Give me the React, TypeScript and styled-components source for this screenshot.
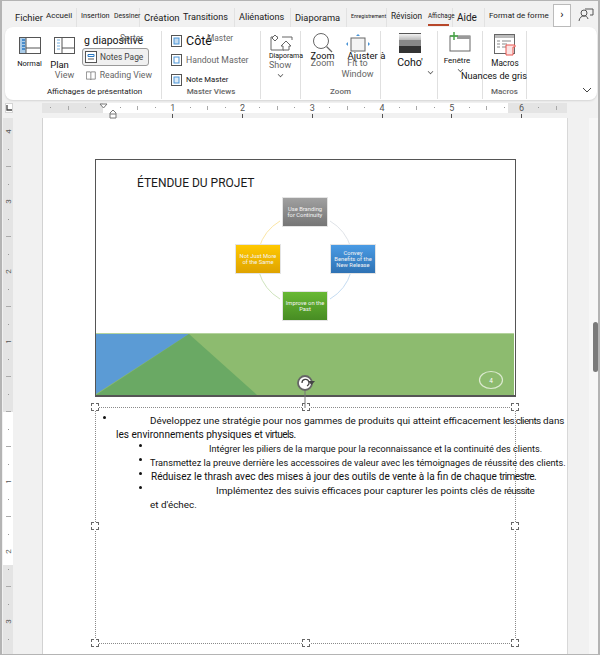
import React from "react";
import styled, { createGlobalStyle } from "styled-components";

const Global = createGlobalStyle`
  html, body { margin: 0; padding: 0; background: #fff; }
  * { box-sizing: border-box; }
  body { font-family: Roboto, "Open Sans", sans-serif; }
`;

const tabs = [
  { label: "Fichier", w: 27, size: 9.4 },
  { label: "Accueil", w: 31, size: 8, sep: true, up: true },
  { label: "Insertion", w: 29, size: 7.3, up: true },
  { label: "Dessiner", w: 26, size: 6.8, sep: true, up: true },
  { label: "Création", w: 35, size: 9.5 },
  { label: "Transitions", w: 52, size: 9.1, sep: true },
  { label: "Aliénations", w: 52, size: 9.1, sep: true },
  { label: "Diaporama", w: 52, size: 9.3, sep: true },
  { label: "Enregistrement", w: 36, size: 5.2, sep: true, up: true },
  { label: "Révision", w: 33, size: 8.3, up: true },
  { label: "Affichage", w: 25, size: 6.3, active: true, sep: true, up: true },
  { label: "Aide", w: 28, size: 10, sep: true },
  { label: "Format de forme", w: 60, size: 8, up: true }
];

const hRuler = Array.from({ length: 30 }, (_, i) => i - 3);
const vRuler = Array.from({ length: 30 }, (_, i) => i);
const vLabels: Record<number, number> = { 0: 4, 4: 3, 8: 2, 12: 1, 20: 1, 24: 2, 28: 3 };

export default function App() {
  return (
    <Window>
      <Global />
      <TabBar>
        {tabs.map(t => (
          <Tab key={t.label} $w={t.w} $size={t.size} $active={t.active} $sep={t.sep} $up={t.up}>
            {t.label}
          </Tab>
        ))}
        <MoreBox>›</MoreBox>
        <CommentIcon width="16" height="16" viewBox="0 0 16 16">
          <circle cx="6" cy="6" r="3" fill="none" stroke="#555" />
          <path d="M1 14c.5-3.5 2.5-5 5-5s3.500 1 4 3M7 2h8v6h-3" fill="none" stroke="#555" />
        </CommentIcon>
      </TabBar>

      <Ribbon>
        <Group $w={157}>
          <GroupBody $pad={7}>
            <BigButton $w={35}>
              <IconSlot $h={24}>
                <svg width="22" height="17" viewBox="0 0 22 17">
                  <rect x=".5" y=".5" width="21" height="16" fill="#fff" stroke="#555" />
                  <rect x="1" y="1" width="6" height="15" fill="#a9cbe8" />
                  <path d="M3 3h3M3 6h3M3 9h3M3 12h3" stroke="#2b79c2" strokeWidth="1.500" />
                  <path d="M7 1v15M7 11h14" stroke="#555" />
                </svg>
              </IconSlot>
              <SmallBlack $size={7.5} $mt={1}>Normal</SmallBlack>
            </BigButton>
            <BigButton $w={35}>
              <IconSlot $h={24}>
                <svg width="21" height="17" viewBox="0 0 21 17">
                  <rect x=".5" y=".5" width="20" height="16" fill="#fff" stroke="#555" />
                  <path d="M3 3h3M3 6h3M3 9h3M3 12h3" stroke="#74b0e0" />
                  <path d="M8 1v15M8 11h12" stroke="#555" />
                </svg>
              </IconSlot>
              <PlanLabel>Plan</PlanLabel>
              <Ghost>View</Ghost>
            </BigButton>
            <ViewColumn>
              <ViewLine>
                <BlackLabel $size={10.5}>g diapositive</BlackLabel>
                <GhostOver>Sorter</GhostOver>
              </ViewLine>
              <NotesButton>
                <svg width="12" height="12" viewBox="0 0 12 12">
                  <rect x=".5" y=".5" width="11" height="11" fill="#fff" stroke="#555" />
                  <path d="M3 3.500h6v2H3z" fill="none" stroke="#2b79c2" />
                  <path d="M3 8h6" stroke="#555" />
                </svg>
                <span>Notes Page</span>
              </NotesButton>
              <ReadingRow>
                <svg width="12" height="11" viewBox="0 0 12 11">
                  <path d="M.5 1h5l.5 1 .5-1h5v9h-5l-.5 1-.5-1h-5zM6 2v8" fill="none" stroke="#777" />
                </svg>
                <span>Reading View</span>
              </ReadingRow>
            </ViewColumn>
          </GroupBody>
          <GroupLabel $dark>Affichages de présentation</GroupLabel>
        </Group>

        <Group $w={99}>
          <MasterColumn>
            <MasterRow>
              <MasterIcon $fill="#c5dcf0" />
              <BlackLabel $size={12.5}>Côté</BlackLabel>
              <GhostInline>Master</GhostInline>
            </MasterRow>
            <MasterRow>
              <MasterIcon $fill="#fff" />
              <GhostText $size={8.7}>Handout Master</GhostText>
            </MasterRow>
            <MasterRow>
              <MasterIcon $fill="#dcebf7" />
              <BlackLabel $size={7.7}>Note Master</BlackLabel>
            </MasterRow>
          </MasterColumn>
          <GroupLabel>Master Views</GroupLabel>
        </Group>

        <Group $w={40}>
          <GroupBody $pad={8}>
            <ShowButton>
              <ShowIcon width="24" height="19" viewBox="0 0 24 19">
                <path d="M2 4h7M13 4h10M2 4v13h13M23 4v3" fill="none" stroke="#666" />
                <path d="M6 2l3 3-3 3-3-3zM17 8l5 5h-2v4h-6v-4h-2z" fill="#fff" stroke="#666" />
              </ShowIcon>
              <NarrowBlack>Diaporama</NarrowBlack>
              <Ghost>Show</Ghost>
              <ShowChevron />
            </ShowButton>
          </GroupBody>
        </Group>

        <Group $w={80}>
          <GroupBody $pad={8}>
            <BigButton $w={27}>
              <IconSlot $h={24} $lift={5}>
                <svg width="22" height="22" viewBox="0 0 22 22">
                  <circle cx="9" cy="9" r="7.500" fill="#fff" stroke="#666" />
                  <path d="M14.500 14.500L20 20" stroke="#666" strokeWidth="1.300" />
                </svg>
              </IconSlot>
              <StackedLabel>
                <BlackLabel $size={9.2}>Zoom</BlackLabel>
                <Ghost>Zoom</Ghost>
              </StackedLabel>
            </BigButton>
            <BigButton $w={43}>
              <IconSlot $h={24} $lift={2}>
                <svg width="24" height="20" viewBox="0 0 24 20">
                  <rect x="5" y="4" width="14" height="13" fill="#f4f4f4" stroke="#666" />
                  <path d="M12 0l2 2h-4zM0 10l2-2v4zM24 10l-2-2v4z" fill="#4a94d6" />
                </svg>
              </IconSlot>
              <StackedLabel>
                <AjusterLabel>Ajuster à</AjusterLabel>
                <Ghost>Fit to</Ghost>
              </StackedLabel>
              <Ghost>Window</Ghost>
            </BigButton>
          </GroupBody>
          <GroupLabel>Zoom</GroupLabel>
        </Group>

        <Group $w={57}>
          <GroupBody $pad={14}>
            <BigButton $w={30}>
              <IconSlot $h={24} $lift={5}>
                <ColorSwatch />
              </IconSlot>
              <SmallBlack $size={10.5} $mt={0}>Coho'</SmallBlack>
            </BigButton>
            <ChevronEnd />
          </GroupBody>
        </Group>

        <Group $w={45}>
          <GroupBody $pad={5}>
            <BigButton $w={34}>
              <IconSlot $h={24} $lift={6}>
                <svg width="24" height="20" viewBox="0 0 24 20">
                  <rect x="2" y="4" width="20" height="15" fill="#fff" stroke="#666" />
                  <rect x="9" y="4" width="13" height="3" fill="#999" />
                  <path d="M6 0v8M2 4h8" stroke="#46a546" strokeWidth="1.500" />
                </svg>
              </IconSlot>
              <FenetreLabel>Fenêtre</FenetreLabel>
              <FenetreChevron />
            </BigButton>
          </GroupBody>
          <GrayOverlay>Nuances de gris</GrayOverlay>
        </Group>

        <Group $w={44}>
          <GroupBody $pad={5}>
            <BigButton $w={34}>
              <IconSlot $h={24}>
                <svg width="23" height="23" viewBox="0 0 23 23">
                  <rect x=".5" y=".5" width="20" height="19" fill="#fff" stroke="#666" />
                  <rect x="1" y="1" width="19" height="3" fill="#bbb" />
                  <path d="M3 7h3M3 10h3M3 13h3M8 7h9M8 10h5M8 13h5" stroke="#888" />
                  <path d="M12 11h9v2h-2v8h-7z" fill="#fbe4e4" stroke="#e8544f" />
                </svg>
              </IconSlot>
              <SmallBlack $size={8.2} $mt={1}>Macros</SmallBlack>
            </BigButton>
          </GroupBody>
          <GroupLabel>Macros</GroupLabel>
        </Group>

        <CollapseSlot>
          <svg width="10" height="6" viewBox="0 0 10 6">
            <path d="M1 1l4 4 4-4" fill="none" stroke="#444" />
          </svg>
        </CollapseSlot>
      </Ribbon>

      <RulerRow>
        <CornerBox>
          <svg width="6" height="6" viewBox="0 0 6 6">
            <path d="M1 0v5h5" fill="none" stroke="#444" strokeWidth="1.300" />
          </svg>
        </CornerBox>
        <RulerTrack>
          {hRuler.map(i => (
            <RulerCell key={i}>
              {i % 4 === 0 && i > -4 && i !== 0 ? (
                <>
                  <RulerNumber>{i / 4}</RulerNumber>
                  <DarkTick />
                </>
              ) : i % 2 === 0 && i !== 0 ? (
                <LongTick />
              ) : i !== 0 ? (
                <Dot />
              ) : null}
            </RulerCell>
          ))}
          <IndentMarks width="30" height="16" viewBox="0 0 30 16">
            <path d="M1 1h7l-3.500 4z" fill="#fff" stroke="#777" />
            <path d="M11 10l3-3 3 3v5h-6zM11 11h6" fill="#fff" stroke="#777" />
          </IndentMarks>
        </RulerTrack>
      </RulerRow>

      <Workspace>
        <SidePanel>
          <VerticalRuler>
            {vRuler.map(i => (
              <VCell key={i}>
                {vLabels[i] ? <VNumber>{vLabels[i]}</VNumber> : i % 2 === 0 ? <VTick /> : <VDot />}
              </VCell>
            ))}
          </VerticalRuler>
        </SidePanel>

        <Page>
          <Slide>
            <SlideTitle>ÉTENDUE DU PROJET</SlideTitle>
            <Cycle width="120" height="120" viewBox="0 0 120 120">
              <path d="M35 21A47 47 0 0 0 14 48" fill="none" stroke="#fbe6a6" />
              <path d="M85 21A47 47 0 0 1 106 48" fill="none" stroke="#dfe3e8" />
              <path d="M106 72A47 47 0 0 1 85 99" fill="none" stroke="#c5dcf2" />
              <path d="M14 72A47 47 0 0 0 35 99" fill="none" stroke="#cfe4bd" />
            </Cycle>
            <Node $x={186} $y={37} $from="#a0a0a0" $to="#757575">Use Branding for Continuity</Node>
            <Node $x={234} $y={84} $from="#4a9be4" $to="#2e72b4">Convey Benefits of the New Release</Node>
            <Node $x={139} $y={84} $from="#ffc800" $to="#dfa300">Not Just More of the Same</Node>
            <Node $x={186} $y={131} $from="#68b934" $to="#478c23">Improve on the Past</Node>
            <Band width="418" height="62" viewBox="0 0 418 62">
              <rect width="418" height="62" fill="#8dbb6f" />
              <rect width="418" height="1" fill="#b4d39d" />
              <path d="M0 1h93L0 61z" fill="#5b9bd5" />
              <path d="M0 62L93 1l68 61z" fill="#6aa964" />
              <ellipse cx="395" cy="47" rx="11.500" ry="8.500" fill="none" stroke="#dcead0" strokeWidth="1.200" />
              <text x="395" y="49.500" textAnchor="middle" fontSize="6.500" fontFamily="Roboto" fill="#fff">4</text>
            </Band>
            <RotateHandle width="24" height="34" viewBox="0 0 24 34">
              <path d="M10 16v18" stroke="#777" />
              <circle cx="10" cy="9" r="7" fill="#fff" stroke="#666" strokeWidth="1.800" />
              <path d="M7 9a3.500 3.500 0 1 1 5 3" fill="none" stroke="#444" strokeWidth="1.200" />
              <path d="M13 7h7l-3.500 4z" fill="#444" />
            </RotateHandle>
          </Slide>

          <TextBox>
            <BulletLine $bullet={7} $indent={47} $size={9.9}>
              Développez une stratégie pour nos gammes de produits qui atteint efficacement <Tight>les clients</Tight> dans
            </BulletLine>
            <Wrapped $indent={20} $size={10.1}>les environnements physiques et <Tight>virtuels</Tight>.</Wrapped>
            <BulletLine $bullet={43} $indent={70} $size={9.1}>
              Intégrer les piliers de la marque pour la reconnaissance et la continuité des clients.
            </BulletLine>
            <BulletLine $bullet={43} $indent={11} $size={9.2}>
              Transmettez la preuve derrière les accessoires de valeur avec les témoignages de réussite des clients.
            </BulletLine>
            <BulletLine $bullet={43} $indent={12} $size={10}>
              Réduisez le thrash avec des mises à jour des outils de vente à la fin de chaque <Tight>trimestre</Tight>.
            </BulletLine>
            <BulletLine $bullet={43} $indent={77} $size={9.9}>
              Implémentez des suivis efficaces pour capturer les points clés de <Tight>réussite</Tight>
            </BulletLine>
            <Wrapped $indent={54} $size={9.9}>et d'échec.</Wrapped>
            <Handle $h="left" $v="top" />
            <Handle $h="center" $v="top" />
            <Handle $h="right" $v="top" />
            <Handle $h="left" $v="middle" />
            <Handle $h="right" $v="middle" />
            <Handle $h="left" $v="bottom" />
            <Handle $h="center" $v="bottom" />
            <Handle $h="right" $v="bottom" />
          </TextBox>
        </Page>

        <ScrollPanel>
          <ScrollThumb />
        </ScrollPanel>
      </Workspace>
    </Window>
  );
}

const Window = styled.div`
  width: 600px;
  height: 655px;
  overflow: hidden;
  display: flex;
  flex-direction: column;
  background: #f1f1f1;
  border: 1px solid #b4b4b4;
  border-width: 1px 2px 1px 2px;
  color: #111;
  position: relative;
`;

const TabBar = styled.div`
  height: 26px;
  display: flex;
  align-items: flex-end;
  padding-left: 13px;
  flex-shrink: 0;
`;

const Tab = styled.div<{ $w: number; $size: number; $active?: boolean; $sep?: boolean; $up?: boolean }>`
  width: ${p => p.$w}px;
  height: 19px;
  margin-right: 4px;
  font-size: ${p => p.$size}px;
  white-space: nowrap;
  line-height: ${p => (p.$up ? 16 : 19)}px;
  position: relative;
  color: #1a1a1a;
  border-right: ${p => (p.$sep ? "1px solid #e2e2e2" : "none")};

  &::after {
    content: "";
    display: ${p => (p.$active ? "block" : "none")};
    position: absolute;
    left: 0;
    right: 3px;
    bottom: 1px;
    height: 2px;
    background: #b7472a;
  }
`;

const MoreBox = styled.div`
  width: 18px;
  height: 23px;
  margin: 0 7px 0 0;
  background: #fff;
  border: 1px solid #bbb;
  font-size: 11px;
  text-align: center;
  line-height: 20px;
`;

const CommentIcon = styled.svg`
  margin-bottom: 4px;
`;

const Ribbon = styled.div`
  height: 73px;
  margin: 0 1px 0 3px;
  background: #fff;
  border-radius: 8px;
  display: flex;
  flex-shrink: 0;
  box-shadow: 0 1px 2px rgba(0, 0, 0, 0.12);
`;

const Group = styled.div<{ $w: number }>`
  width: ${p => p.$w}px;
  height: 68px;
  margin-top: 4px;
  flex-shrink: 0;
  display: flex;
  flex-direction: column;
  border-right: 1px solid #e0e0e0;
  position: relative;
`;

const GroupBody = styled.div<{ $pad: number }>`
  flex: 1;
  display: flex;
  padding-left: ${p => p.$pad}px;
  min-height: 0;
`;

const GroupLabel = styled.div<{ $dark?: boolean }>`
  height: 14px;
  flex-shrink: 0;
  line-height: 13px;
  text-align: center;
  font-size: 8px;
  padding-left: ${p => (p.$dark ? 23 : 0)}px;
  font-weight: ${p => (p.$dark ? 400 : 500)};
  color: ${p => (p.$dark ? "#222" : "#666")};
  white-space: nowrap;
`;

const BigButton = styled.div<{ $w: number }>`
  width: ${p => p.$w}px;
  display: flex;
  flex-direction: column;
  align-items: center;
  flex-shrink: 0;
`;

const IconSlot = styled.div<{ $h: number; $lift?: number }>`
  height: ${p => p.$h}px;
  margin-top: 2px;
  padding-bottom: ${p => p.$lift || 0}px;
  display: flex;
  align-items: center;
  justify-content: center;
`;

const SmallBlack = styled.div<{ $size: number; $mt: number }>`
  font-size: ${p => p.$size}px;
  line-height: 11px;
  margin-top: ${p => p.$mt}px;
  white-space: nowrap;
  color: #111;
`;

const PlanLabel = styled.div`
  font-size: 9.500px;
  line-height: 11px;
  margin: 2px 10px 0 0;
  color: #111;
`;

const FenetreLabel = styled.div`
  font-size: 8px;
  line-height: 11px;
  margin: -2px 6px 0 0;
  white-space: nowrap;
  color: #111;
`;

const NarrowBlack = styled.div`
  font-size: 7px;
  line-height: 8px;
  margin-top: 0;
  white-space: nowrap;
`;

const Ghost = styled.div`
  font-size: 9px;
  line-height: 11px;
  color: #666;
  white-space: nowrap;
`;

const StackedLabel = styled.div`
  display: flex;
  flex-direction: column;
  align-items: center;
  margin-top: -7px;

  ${Ghost} {
    margin-top: -4px;
  }
`;

const ShowButton = styled.div`
  display: flex;
  flex-direction: column;
  align-items: flex-start;
  width: 30px;
  flex-shrink: 0;
`;

const ShowIcon = styled.svg`
  margin-top: 2px;
  flex-shrink: 0;
`;

const BlackLabel = styled.span<{ $size: number }>`
  font-size: ${p => p.$size}px;
  line-height: 12px;
  white-space: nowrap;
  color: #111;
`;

const AjusterLabel = styled.span`
  font-size: 9.600px;
  line-height: 12px;
  white-space: nowrap;
  color: #111;
  margin-left: 18px;
`;

const GhostText = styled.span<{ $size: number }>`
  font-size: ${p => p.$size}px;
  color: #666;
  white-space: nowrap;
`;

const ViewColumn = styled.div`
  display: flex;
  flex-direction: column;
  width: 70px;
`;

const ViewLine = styled.div`
  height: 18px;
  padding-top: 4px;
  padding-left: 2px;
  position: relative;
  display: flex;
`;

const GhostOver = styled.span`
  position: absolute;
  left: 38px;
  top: 2px;
  font-size: 8.500px;
  color: #666;
`;

const NotesButton = styled.div`
  height: 18px;
  width: 67px;
  background: #f0f0f0;
  border: 1px solid #9a9a9a;
  border-radius: 3px;
  display: flex;
  align-items: center;
  gap: 3px;
  padding-left: 2px;
  font-size: 8.400px;
  color: #444;
  white-space: nowrap;
`;

const ReadingRow = styled.div`
  height: 20px;
  display: flex;
  align-items: center;
  gap: 4px;
  padding-left: 4px;
  font-size: 8.700px;
  color: #666;
  white-space: nowrap;
`;

const MasterColumn = styled.div`
  height: 54px;
  flex-shrink: 0;
  display: flex;
  flex-direction: column;
  padding: 0 0 0 9px;
`;

const MasterRow = styled.div`
  height: 19.500px;
  flex-shrink: 0;
  display: flex;
  align-items: center;
  gap: 4px;
  position: relative;
`;

const GhostInline = styled.span`
  position: absolute;
  left: 36px;
  top: 2px;
  font-size: 8.400px;
  color: #666;
`;

const MasterIcon = styled.span<{ $fill: string }>`
  width: 11px;
  height: 12px;
  flex-shrink: 0;
  background: ${p => p.$fill};
  border: 1.500px solid #555;
  box-shadow: inset 0 0 0 1.500px #fff, inset 0 0 0 2.500px #4a94d6;
`;

const Chevron = styled.span`
  width: 5px;
  height: 5px;
  border-right: 1px solid #555;
  border-bottom: 1px solid #555;
  transform: rotate(45deg) scale(0.8);
`;

const ShowChevron = styled(Chevron)`
  margin: 1px 0 0 9px;
`;

const ChevronEnd = styled(Chevron)`
  margin: 38px 0 0 3px;
`;

const FenetreChevron = styled(Chevron)`
  margin-top: 1px;
`;

const ColorSwatch = styled.span`
  width: 22px;
  height: 20px;
  border-top: 1px solid #555;
  background: linear-gradient(#f2f2f2 0, #bbb 30%, #888 30% 65%, #333 65%);
`;

const GrayOverlay = styled.span`
  position: absolute;
  left: 23px;
  top: 39px;
  font-size: 9.200px;
  white-space: nowrap;
  color: #111;
  z-index: 2;
`;

const CollapseSlot = styled.div`
  flex: 1;
  display: flex;
  justify-content: flex-end;
  align-items: flex-end;
  padding: 0 5px 7px 0;
`;

const RulerRow = styled.div`
  height: 15px;
  margin-top: 3px;
  display: flex;
  flex-shrink: 0;
`;

const CornerBox = styled.div`
  width: 8px;
  height: 10px;
  margin: 0 0 0 3px;
  background: #fff;
  border: 1px solid #d4d4d4;
  display: flex;
  align-items: center;
  justify-content: center;
`;

const RulerTrack = styled.div`
  width: 525px;
  margin-left: 29px;
  padding-left: 0;
  display: flex;
  position: relative;
  height: 15px;
  background: linear-gradient(90deg, #e4e4e4 0 61px, #fff 61px 466px, #e4e4e4 466px) top / 100% 10px no-repeat;
`;

const RulerCell = styled.div`
  width: 17.450px;
  flex-shrink: 0;
  height: 15px;
  display: flex;
  flex-direction: column;
  align-items: center;
`;

const RulerNumber = styled.span`
  font-size: 9px;
  line-height: 10px;
  color: #555;
`;

const DarkTick = styled.span`
  width: 1px;
  height: 4px;
  margin-top: 1px;
  background: #555;
`;

const LongTick = styled.span`
  width: 1px;
  height: 4px;
  margin-top: 3px;
  background: #aaa;
`;

const Dot = styled.span`
  width: 1px;
  height: 1px;
  margin-top: 4px;
  background: #999;
`;

const IndentMarks = styled.svg`
  position: absolute;
  left: 57px;
  top: 0;
`;

const Workspace = styled.div`
  flex: 1;
  display: flex;
  min-height: 0;
`;

const SidePanel = styled.div`
  width: 41px;
  flex-shrink: 0;
  border-right: 1px solid #d2d2d2;
  padding-left: 1px;
`;

const VerticalRuler = styled.div`
  width: 10px;
  height: 100%;
  overflow: hidden;
  padding-top: 5px;
  background: linear-gradient(#e4e4e4 0 294px, #fff 294px 447px, #e4e4e4 447px);
  display: flex;
  flex-direction: column;
  align-items: center;
`;

const VCell = styled.div`
  height: 17.500px;
  flex-shrink: 0;
  display: flex;
  align-items: center;
  justify-content: center;
`;

const VNumber = styled.span`
  font-size: 8px;
  color: #555;
  transform: rotate(-90deg);
`;

const VTick = styled.span`
  width: 5px;
  height: 1px;
  background: #aaa;
`;

const VDot = styled.span`
  width: 1px;
  height: 1px;
  background: #999;
`;

const Page = styled.div`
  width: 524px;
  flex-shrink: 0;
  background: #fff;
  padding: 41px 0 0 52px;
`;

const Slide = styled.div`
  width: 421px;
  height: 238px;
  border: 2px solid #555;
  border-width: 1.500px 1.500px 2px 1.500px;
  position: relative;
  display: flex;
  flex-direction: column;
  justify-content: space-between;
`;

const SlideTitle = styled.div`
  font-size: 12px;
  line-height: 14px;
  padding: 16px 0 0 41px;
  color: #1a1a1a;
`;

const Cycle = styled.svg`
  position: absolute;
  left: 149px;
  top: 40px;
`;

const Node = styled.div<{ $x: number; $y: number; $from: string; $to: string }>`
  position: absolute;
  left: ${p => p.$x}px;
  top: ${p => p.$y}px;
  width: 46px;
  height: 30px;
  padding: 0 2px;
  display: flex;
  align-items: center;
  justify-content: center;
  text-align: center;
  font-size: 5.800px;
  line-height: 6.300px;
  color: #f4f4f4;
  background: linear-gradient(${p => p.$from}, ${p => p.$to});
  border: 1px solid #e4e4e4;
`;

const Band = styled.svg`
  display: block;
  flex-shrink: 0;
`;

const RotateHandle = styled.svg`
  position: absolute;
  left: 199px;
  top: 214px;
  z-index: 3;
`;

const TextBox = styled.div`
  width: 421px;
  height: 237px;
  margin-top: 10px;
  padding-top: 6px;
  border: 1px dotted #8a8a8a;
  position: relative;
`;

const BulletLine = styled.div<{ $bullet: number; $indent: number; $size: number }>`
  display: flex;
  align-items: flex-start;
  white-space: pre;
  font-size: ${p => p.$size}px;
  line-height: 14px;
  padding-left: ${p => p.$bullet}px;
  color: #111;

  &::before {
    content: "";
    width: 3px;
    height: 3px;
    border-radius: 50%;
    background: #111;
    margin: 2px ${p => p.$indent - 3}px 0 0;
    flex-shrink: 0;
  }
`;

const Wrapped = styled.div<{ $indent: number; $size: number }>`
  white-space: nowrap;
  font-size: ${p => p.$size}px;
  line-height: 14px;
  padding-left: ${p => p.$indent}px;
  color: #111;
`;

const Tight = styled.span`
  letter-spacing: -0.600px;
`;

const Handle = styled.span<{ $h: "left" | "center" | "right"; $v: "top" | "middle" | "bottom" }>`
  position: absolute;
  width: 8px;
  height: 8px;
  background: #fff;
  border: 1px dashed #666;
  left: ${p => (p.$h === "left" ? "-5px" : p.$h === "center" ? "calc(50% - 4px)" : "calc(100% - 4px)")};
  top: ${p => (p.$v === "top" ? "-5px" : p.$v === "middle" ? "calc(50% - 4px)" : "calc(100% - 4px)")};
`;

const ScrollPanel = styled.div`
  flex: 1;
  border-left: 1px solid #d8d8d8;
  display: flex;
  justify-content: flex-end;
  background: linear-gradient(90deg, #f1f1f1 0 70%, #f7f7f7 70%);
`;

const ScrollThumb = styled.div`
  width: 5px;
  height: 50px;
  margin-top: 204px;
  border-radius: 3px;
  background: #7a7a7a;
`;
